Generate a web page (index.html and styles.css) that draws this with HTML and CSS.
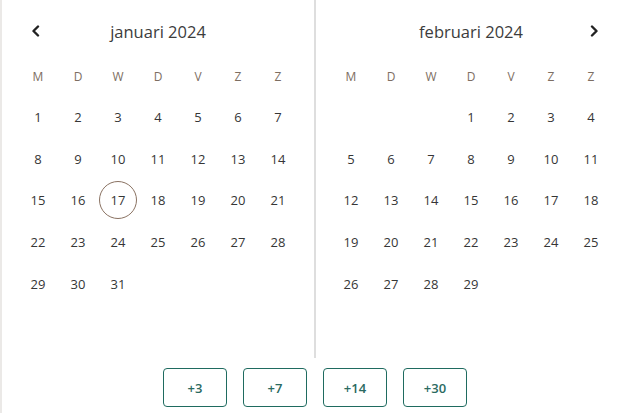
FILE: index.html
```html
<!DOCTYPE html>
<html lang="nl">
<head>
    <meta charset="UTF-8">
    <meta name="viewport" content="width=device-width, initial-scale=1.0">
    <title>Datum kiezen</title>
    <link rel="stylesheet" href="styles.css">
</head>
<body>

    <div class="picker">
        <div class="calendar">
            <div class="month month-left">
                <div class="month-header">
                    <button class="nav-btn nav-prev" aria-label="Vorige maand">
                        <svg width="10" height="12" viewBox="0 0 10 12"><path d="M7 1.5 L2.5 6 L7 10.5" fill="none" stroke="#222" stroke-width="2.4" stroke-linecap="round" stroke-linejoin="round"/></svg>
                    </button>
                    <span class="month-title">januari 2024</span>
                </div>
                <div class="weekdays">
                    <span>M</span><span>D</span><span>W</span><span>D</span><span>V</span><span>Z</span><span>Z</span>
                </div>
                <div class="days">
                    <span>1</span><span>2</span><span>3</span><span>4</span><span>5</span><span>6</span><span>7</span>
                    <span>8</span><span>9</span><span>10</span><span>11</span><span>12</span><span>13</span><span>14</span>
                    <span>15</span><span>16</span><span class="today">17</span><span>18</span><span>19</span><span>20</span><span>21</span>
                    <span>22</span><span>23</span><span>24</span><span>25</span><span>26</span><span>27</span><span>28</span>
                    <span>29</span><span>30</span><span>31</span>
                </div>
            </div>

            <div class="month month-right">
                <div class="month-header">
                    <span class="month-title">februari 2024</span>
                    <button class="nav-btn nav-next" aria-label="Volgende maand">
                        <svg width="10" height="12" viewBox="0 0 10 12"><path d="M3 1.5 L7.5 6 L3 10.5" fill="none" stroke="#222" stroke-width="2.4" stroke-linecap="round" stroke-linejoin="round"/></svg>
                    </button>
                </div>
                <div class="weekdays">
                    <span>M</span><span>D</span><span>W</span><span>D</span><span>V</span><span>Z</span><span>Z</span>
                </div>
                <div class="days">
                    <span></span><span></span><span></span><span>1</span><span>2</span><span>3</span><span>4</span>
                    <span>5</span><span>6</span><span>7</span><span>8</span><span>9</span><span>10</span><span>11</span>
                    <span>12</span><span>13</span><span>14</span><span>15</span><span>16</span><span>17</span><span>18</span>
                    <span>19</span><span>20</span><span>21</span><span>22</span><span>23</span><span>24</span><span>25</span>
                    <span>26</span><span>27</span><span>28</span><span>29</span>
                </div>
            </div>
        </div>

        <div class="quick-picks">
            <button class="quick-btn">+3</button>
            <button class="quick-btn">+7</button>
            <button class="quick-btn">+14</button>
            <button class="quick-btn">+30</button>
        </div>
    </div>

</body>
</html>
```

FILE: styles.css
```css
* {
    margin: 0;
    padding: 0;
    box-sizing: border-box;
}

body {
    font-family: 'Open Sans', 'Noto Sans', sans-serif;
    background: #ffffff;
    color: #333333;
    width: 622px;
    height: 413px;
    overflow: hidden;
}

.picker {
    border-left: 2px solid #ebe9e7;
    height: 413px;
}

.calendar {
    display: flex;
    height: 358px;
}

.month-left {
    width: 314px;
    padding-left: 16px;
    border-right: 2px solid #dedede;
}

.month-right {
    width: 306px;
    padding-left: 15px;
}

.month-header {
    position: relative;
    height: 62px;
    width: 280px;
    display: flex;
    align-items: center;
    justify-content: center;
}

.month-title {
    font-size: 16.5px;
    color: #3c3c3c;
}

.nav-btn {
    position: absolute;
    top: 25px;
    width: 12px;
    height: 12px;
    border: none;
    background: none;
    cursor: pointer;
    display: flex;
    align-items: center;
    justify-content: center;
}

.nav-prev {
    left: 12px;
}

.nav-next {
    right: 11px;
}

.weekdays {
    display: grid;
    grid-template-columns: repeat(7, 40px);
    height: 28px;
    align-items: center;
    font-size: 12px;
    color: #7d6e62;
}

.weekdays span,
.days span {
    text-align: center;
}

.days {
    display: grid;
    grid-template-columns: repeat(7, 40px);
    grid-auto-rows: 41.75px;
    margin-top: 6px;
    align-items: center;
    font-size: 13px;
    color: #363636;
}

.days span {
    justify-self: center;
    width: 38px;
    height: 38px;
    line-height: 38px;
    border-radius: 50%;
}

.days .today {
    border: 1px solid #8a7262;
    line-height: 36px;
}

.quick-picks {
    display: flex;
    justify-content: center;
    gap: 16px;
    padding-left: 6px;
    margin-top: 10px;
}

.quick-btn {
    width: 64px;
    height: 39px;
    border: 1px solid #1f6b60;
    border-radius: 4px;
    background: #ffffff;
    color: #2a6a61;
    font-family: 'Open Sans', 'Noto Sans', sans-serif;
    font-size: 13px;
    font-weight: 600;
    cursor: pointer;
}
```
